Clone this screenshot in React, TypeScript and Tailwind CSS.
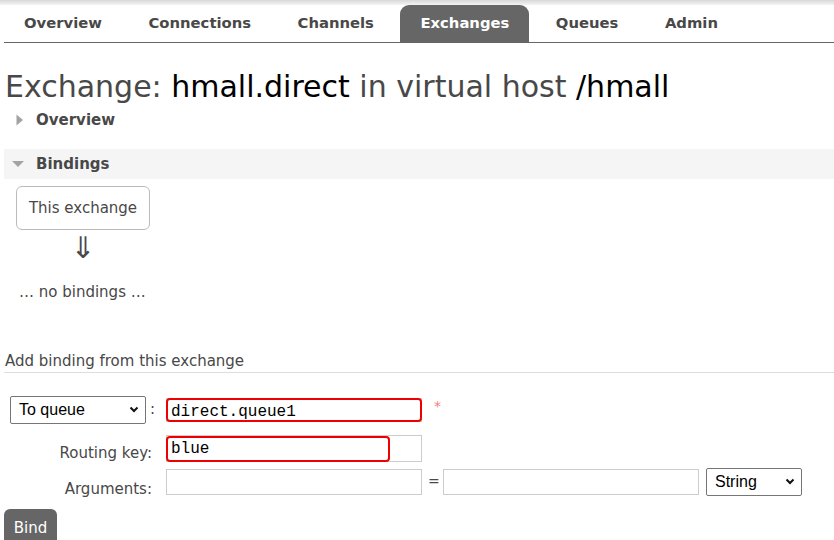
import React from "react";

const tabs = ["Overview", "Connections", "Channels", "Exchanges", "Queues", "Admin"];

function TriangleRight() {
  return (
    <svg width="8" height="12" viewBox="0 0 8 12" className="block">
      <path d="M0.5 0.5 L7 6 L0.5 11.5 Z" fill="#a3a3a3" />
    </svg>
  );
}

function TriangleDown() {
  return (
    <svg width="12" height="8" viewBox="0 0 12 8" className="block">
      <path d="M0 1 L12 1 L6 7 Z" fill="#a3a3a3" />
    </svg>
  );
}

function Chevron() {
  return (
    <svg width="10" height="7" viewBox="0 0 10 7" className="block">
      <path d="M1.5 1.5 L5 5 L8.5 1.5" fill="none" stroke="#111" strokeWidth="2" />
    </svg>
  );
}

const mono = { fontFamily: '"Liberation Mono", "Courier New", monospace' };
const arial = { fontFamily: '"Liberation Sans", Arial, sans-serif' };

export default function App() {
  return (
    <div
      className="w-[834px] h-[540px] overflow-hidden bg-white text-[#484848]"
      style={{ fontFamily: '"DejaVu Sans", Verdana, sans-serif' }}
    >
      <div className="h-[5px] bg-gradient-to-b from-[#d8d8d8] to-[#f4f4f4]" />

      <nav className="ml-[4px] flex gap-[6.5px] border-b border-[#666]">
        {tabs.map((t) => (
          <div
            key={t}
            className={
              t === "Exchanges"
                ? "h-[37px] px-[20px] flex items-center font-bold text-[14.8px] rounded-t-[9px] bg-[#666] text-white"
                : "h-[37px] px-[20px] flex items-center font-bold text-[14.8px] text-[#484848]"
            }
          >
            {t}
          </div>
        ))}
      </nav>

      <h1 className="ml-[5px] mt-[26px] text-[30px] leading-[36px] font-normal text-[#484848]">
        Exchange: <span className="text-black">hmall.direct</span> in virtual host{" "}
        <span className="text-black">/hmall</span>
      </h1>

      <div className="ml-[16px] mt-[3px] h-[24px] flex items-center gap-[12px]">
        <TriangleRight />
        <span className="font-bold text-[15px]">Overview</span>
      </div>

      <div className="ml-[4px] mt-[17px] h-[30px] bg-[#f5f5f5] flex items-center gap-[12px] pl-[8px]">
        <TriangleDown />
        <span className="font-bold text-[15px]">Bindings</span>
      </div>

      <div className="ml-[16px] mt-[7px] flex flex-col items-start">
        <div className="w-[134px] h-[44px] border border-[#bbb] rounded-[6px] flex items-center justify-center text-[15px]">
          This exchange
        </div>
        <div className="w-[134px] h-[36px] flex items-center justify-center text-[30px] leading-none">
          ⇓
        </div>
        <div className="ml-[3px] mt-[15px] text-[15px]">… no bindings …</div>
      </div>

      <div className="ml-[4px] mt-[48px] border-b border-[#ddd] pb-[2px] pl-[1px] text-[15px] leading-[18px]">
        Add binding from this exchange
      </div>

      <div className="mt-[22px] ml-[10px] flex flex-col text-[15px]">
        <div className="flex items-center h-[30px]">
          <div
            className="w-[136px] h-[28px] border border-[#767676] rounded-[2px] flex items-center justify-between pl-[8px] pr-[6px] text-black text-[16px]"
            style={arial}
          >
            <span>To queue</span>
            <Chevron />
          </div>
          <span className="ml-[4px] w-[16px]">:</span>
          <div className="relative w-[256px] h-[24px] border border-[#ccc]">
            <div className="absolute inset-[-1px] border-2 border-[#e00] rounded-[4px]" />
            <span className="absolute left-[4px] top-[1px] text-[16px] text-black" style={mono}>
              direct.queue1
            </span>
          </div>
          <span className="ml-[12px] mt-[-6px] text-[#f08080] text-[14px]">*</span>
        </div>

        <div className="flex items-center h-[30px] mt-[9px]">
          <div className="w-[142px] text-right pt-[10px]">Routing key:</div>
          <div className="ml-[14px] relative w-[256px] h-[27px] border border-[#ccc]">
            <div className="absolute left-[-1px] top-0 w-[224px] h-[26px] border-2 border-[#e00] rounded-[4px]" />
            <span className="absolute left-[4px] top-[1px] text-[16px] text-black" style={mono}>
              blue
            </span>
          </div>
        </div>

        <div className="flex items-center h-[30px] mt-[3px]">
          <div className="w-[142px] text-right pt-[16px]">Arguments:</div>
          <div className="ml-[14px] w-[256px] h-[26px] border border-[#ccc]" />
          <span className="ml-[6px] w-[15px] text-[14px]">=</span>
          <div className="w-[256px] h-[26px] border border-[#ccc]" />
          <div
            className="ml-[7px] w-[96px] h-[28px] border border-[#767676] rounded-[2px] flex items-center justify-between pl-[8px] pr-[6px] text-black text-[16px]"
            style={arial}
          >
            <span>String</span>
            <Chevron />
          </div>
        </div>
      </div>

      <div className="ml-[4px] mt-[12px] w-[53px] h-[40px] bg-[#666] rounded-t-[6px] text-white text-[15px] flex items-start justify-center pt-[8px]">
        Bind
      </div>
    </div>
  );
}
